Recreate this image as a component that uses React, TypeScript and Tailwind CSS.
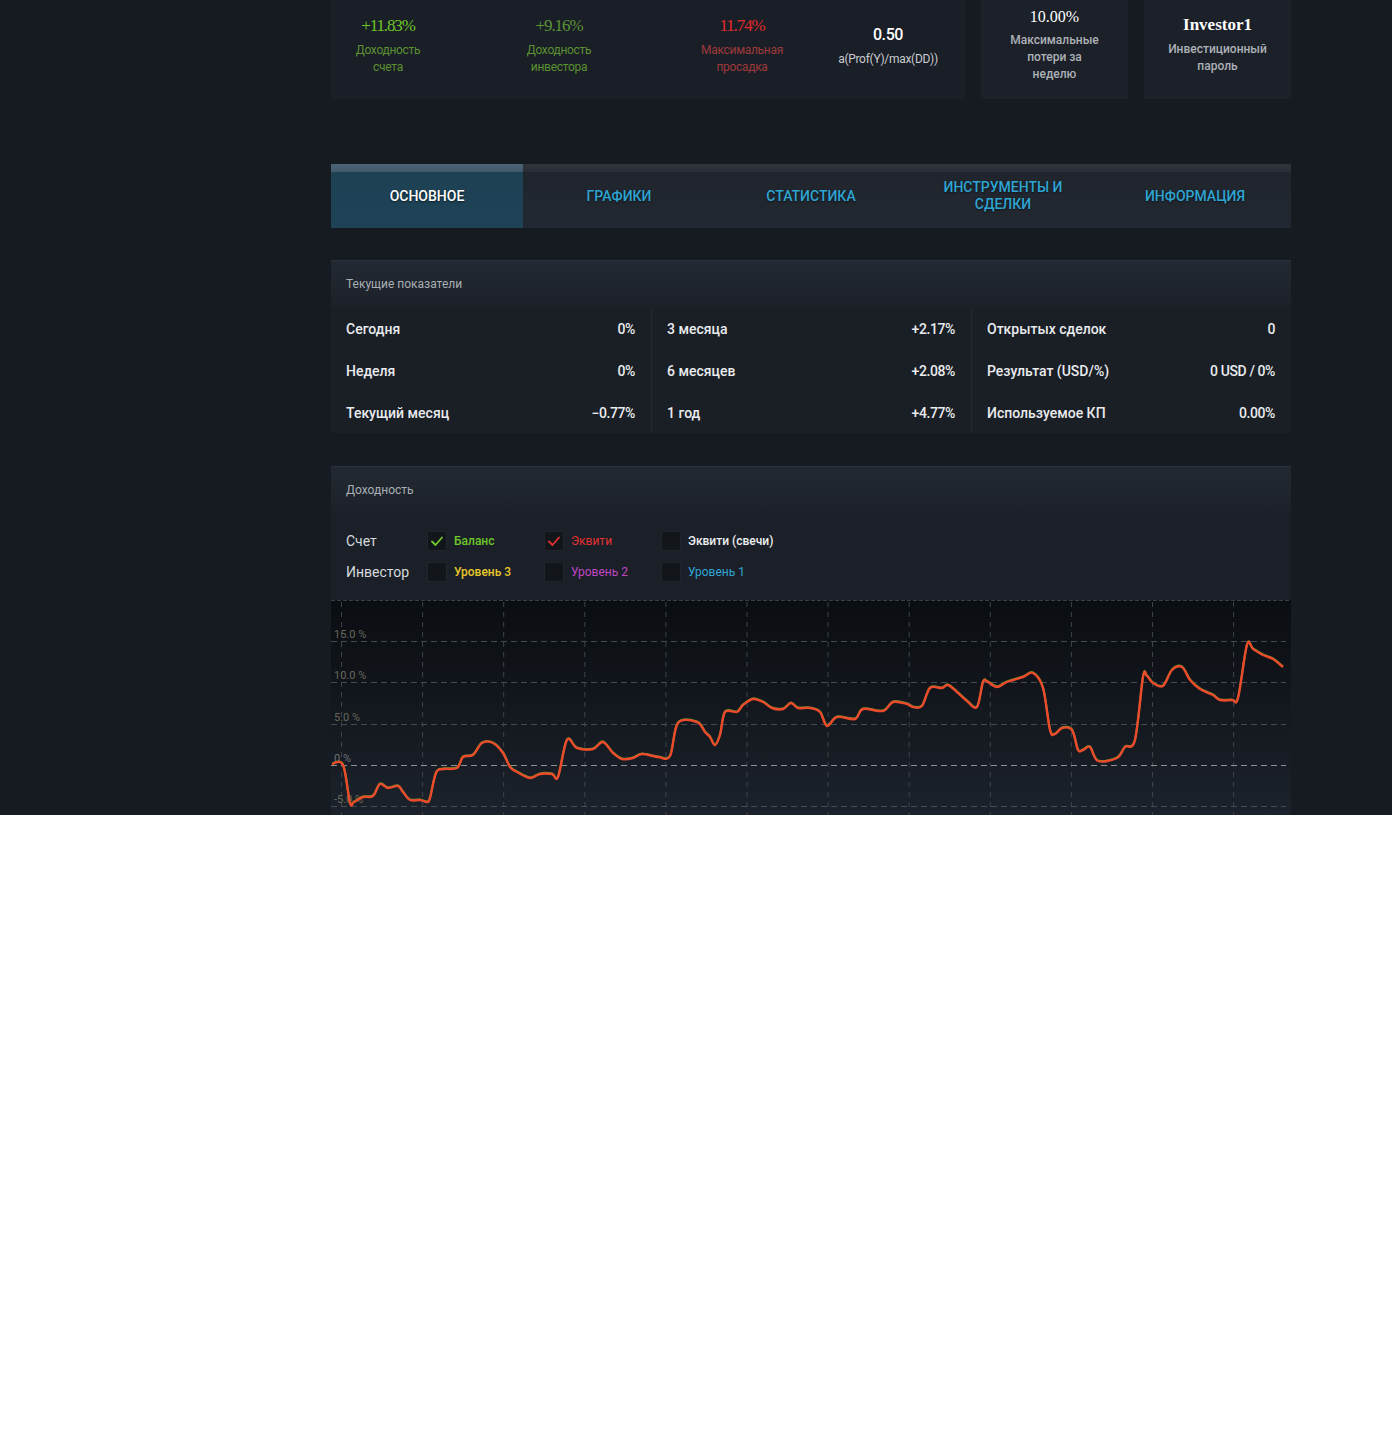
import React from "react";

const font = { fontFamily: "Roboto, 'Noto Sans', sans-serif" };
const serif = "font-['Liberation_Serif',serif]";

// chart line, traced in page pixels (x, y)
const curve: [number, number][] = [
  [332, 764], [343, 765], [350, 803], [354, 802], [363, 797], [373, 796], [380, 784], [388, 788],
  [398, 786], [403, 792], [410, 800], [420, 800], [427, 802], [430, 798], [436, 773], [443, 769],
  [457, 768], [463, 757], [473, 755], [482, 743], [493, 743], [503, 753], [510, 767], [517, 772],
  [530, 778], [540, 774], [552, 774], [558, 777], [567, 740], [577, 748], [593, 749], [603, 742],
  [613, 753], [622, 759], [633, 758], [642, 754], [658, 757], [670, 756], [678, 723], [697, 722],
  [705, 732], [710, 737], [715, 745], [720, 735], [725, 712], [737, 712], [743, 705], [753, 699],
  [763, 702], [772, 708], [783, 709], [791, 703], [798, 708], [810, 708], [820, 712], [827, 726],
  [837, 717], [855, 719], [863, 709], [883, 711], [893, 702], [907, 704], [913, 707], [922, 706],
  [930, 688], [942, 688], [948, 685], [957, 692], [967, 701], [977, 707], [983, 682], [988, 682],
  [997, 687], [1007, 682], [1023, 677], [1033, 673], [1043, 688], [1050, 730], [1055, 734],
  [1062, 728], [1072, 730], [1078, 750], [1083, 750], [1090, 747], [1098, 761], [1117, 758],
  [1125, 747], [1135, 740], [1143, 677], [1147, 676], [1153, 683], [1163, 686], [1172, 670],
  [1182, 667], [1190, 680], [1200, 689], [1213, 695], [1220, 700], [1232, 700], [1238, 698],
  [1247, 645], [1253, 649], [1263, 655], [1273, 659], [1283, 667],
];

function smoothPath(pts: [number, number][]) {
  const p = pts.map(([x, y]) => [x - 331, y - 600]);
  let d = `M${p[0][0]},${p[0][1]}`;
  for (let i = 0; i < p.length - 1; i++) {
    const p0 = p[i - 1] || p[i];
    const p1 = p[i];
    const p2 = p[i + 1];
    const p3 = p[i + 2] || p2;
    const c1x = p1[0] + (p2[0] - p0[0]) / 6;
    const c1y = p1[1] + (p2[1] - p0[1]) / 6;
    const c2x = p2[0] - (p3[0] - p1[0]) / 6;
    const c2y = p2[1] - (p3[1] - p1[1]) / 6;
    d += ` C${c1x.toFixed(1)},${c1y.toFixed(1)} ${c2x.toFixed(1)},${c2y.toFixed(1)} ${p2[0]},${p2[1]}`;
  }
  return d;
}

const gridY = [
  { y: 41, label: "15.0 %" },
  { y: 82, label: "10.0 %" },
  { y: 124, label: "5.0 %" },
  { y: 165, label: "0 %" },
  { y: 206, label: "-5.0 %" },
];
const gridX = Array.from({ length: 12 }, (_, i) => 10.5 + i * 81.1);

function TopStat({ value, label, w, ml, valueCls, labelCls }: { value: string; label: React.ReactNode; w: string; ml: string; valueCls: string; labelCls: string }) {
  return (
    <div className={`${w} ${ml} shrink-0 text-center pt-[13px]`}>
      <div className={valueCls}>{value}</div>
      <div className={`mt-[3px] text-[12px] leading-[17px] tracking-[-0.3px] ${labelCls}`}>{label}</div>
    </div>
  );
}

function Check({ color }: { color: string }) {
  return (
    <svg width="14" height="14" viewBox="0 0 14 14" fill="none">
      <path d="M2 7.5 L5.5 11 L12 3.5" stroke={color} strokeWidth="1.8" strokeLinecap="round" strokeLinejoin="round" />
    </svg>
  );
}

function Option({ checked, text, label }: { checked?: string; text: string; label: string }) {
  return (
    <div className="w-[117px] flex items-center gap-[7px]">
      <div className="w-5 h-5 rounded-[2px] bg-[#12161b] border border-[#20252c] flex items-center justify-center">
        {checked && <Check color={checked} />}
      </div>
      <span className={`text-[12px] ${text}`}>{label}</span>
    </div>
  );
}

const tabs = ["ОСНОВНОЕ", "ГРАФИКИ", "СТАТИСТИКА", "ИНСТРУМЕНТЫ И СДЕЛКИ", "ИНФОРМАЦИЯ"];

const rows = [
  [["Сегодня", "0%"], ["Неделя", "0%"], ["Текущий месяц", "−0.77%"]],
  [["3 месяца", "+2.17%"], ["6 месяцев", "+2.08%"], ["1 год", "+4.77%"]],
  [["Открытых сделок", "0"], ["Результат (USD/%)", "0 USD / 0%"], ["Используемое КП", "0.00%"]],
];

export default function App() {
  const d = smoothPath(curve);
  return (
    <div className="h-[815px] overflow-hidden bg-[#161a21] pl-[331px]" style={font}>
      <div className="w-[960px]">
        {/* top stats */}
        <div className="flex h-[99px] gap-4">
          <div className="w-[634px] bg-[#1a1e26] flex">
            <TopStat w="w-[100px]" ml="ml-[7px]" value="+11.83%" label={<>Доходность<br />счета</>}
              valueCls={`${serif} text-[17px] tracking-[-1.1px] text-[#6cc628]`} labelCls="text-[#5b9132]" />
            <TopStat w="w-[100px]" ml="ml-[71px]" value="+9.16%" label={<>Доходность<br />инвестора</>}
              valueCls={`${serif} text-[17px] tracking-[-1.1px] text-[#5c9436]`} labelCls="text-[#5b9132]" />
            <TopStat w="w-[110px]" ml="ml-[78px]" value="11.74%" label={<>Максимальная<br />просадка</>}
              valueCls={`${serif} text-[17px] tracking-[-1.1px] text-[#e32b2b]`} labelCls="text-[#9e3a3b]" />
            <div className="w-[130px] ml-[26px] shrink-0 text-center pt-[23px]">
              <div className="text-[16px] font-medium text-white tracking-[-0.4px]">0.50</div>
              <div className="mt-[3px] text-[12px] tracking-[-0.3px] text-[#c9ccd0]">a(Prof(Y)/max(DD))</div>
            </div>
          </div>
          <div className="w-[147px] bg-[#1b2029] text-center pt-[5px]">
            <div className={`${serif} text-[16px] text-white`}>10.00%</div>
            <div className="mt-[3px] text-[12px] leading-[17px] font-medium text-[#adb1b6]">Максимальные<br />потери за<br />неделю</div>
          </div>
          <div className="w-[147px] bg-[#1b2029] text-center pt-[12px]">
            <div className={`${serif} text-[17px] font-bold text-white`}>Investor1</div>
            <div className="mt-[3px] text-[12px] leading-[17px] font-medium text-[#adb1b6]">Инвестиционный<br />пароль</div>
          </div>
        </div>

        {/* tabs */}
        <div className="mt-[65px] grid grid-cols-5 h-16">
          {tabs.map((t, i) => (
            <div
              key={t}
              className={
                i === 0
                  ? "bg-[linear-gradient(to_bottom,#4c6576_0,#3f596b_8px,#1e4154_8px,#1e4256_100%)] flex items-center justify-center text-center text-[14px] font-medium text-white [text-shadow:0_1px_2px_rgba(0,0,0,0.6)]"
                  : "bg-[linear-gradient(to_bottom,#2e333c_0,#2a2f37_8px,#20252d_8px,#222831_100%)] flex items-center justify-center text-center text-[14px] font-medium text-[#2ea5d3] leading-[17px] px-8 [text-shadow:0_1px_2px_rgba(0,0,0,0.5)]"
              }
            >
              {t}
            </div>
          ))}
        </div>

        {/* current stats */}
        <div className="mt-8">
          <div className="h-[47px] bg-[linear-gradient(to_bottom,#232932,#1c2129)] border-t border-[#2b3139] flex items-center px-[15px] text-[12px] text-[#a9afb5]">
            Текущие показатели
          </div>
          <div className="grid grid-cols-3 bg-[#1a1e25]">
            {rows.map((col, ci) => (
              <div key={ci} className={ci > 0 ? "border-l border-[#232830]" : ""}>
                {col.map(([l, v]) => (
                  <div key={l} className="h-[42px] flex items-center justify-between pl-[15px] pr-4 pt-[2px] text-[14px] font-medium text-[#e9ebee]">
                    <span>{l}</span>
                    <span className="tracking-[-0.4px]">{v}</span>
                  </div>
                ))}
              </div>
            ))}
          </div>
        </div>

        {/* profitability */}
        <div className="mt-[33px]">
          <div className="h-[47px] bg-[linear-gradient(to_bottom,#232932,#1c2129)] border-t border-[#2b3139] flex items-center px-[15px] text-[12px] text-[#a9afb5]">
            Доходность
          </div>
          <div className="h-[87px] bg-[#1b2028] pt-[18px] pl-[15px] flex flex-col gap-[11px]">
            <div className="flex items-center h-5">
              <span className="w-[81px] text-[14px] text-[#d6dade]">Счет</span>
              <Option checked="#6fc72b" text="font-medium text-[#6fc72b]" label="Баланс" />
              <Option checked="#e3302f" text="text-[#e3302f]" label="Эквити" />
              <Option text="font-medium text-[#eef0f2]" label="Эквити (свечи)" />
            </div>
            <div className="flex items-center h-5">
              <span className="w-[81px] text-[14px] text-[#d6dade]">Инвестор</span>
              <Option text="font-medium text-[#e9c62a]" label="Уровень 3" />
              <Option text="text-[#c045c4]" label="Уровень 2" />
              <Option text="text-[#2fa6d6]" label="Уровень 1" />
            </div>
          </div>
          <div className="h-[215px] bg-[linear-gradient(to_bottom,#0a0d11,#1c222b)]">
            <svg width="960" height="215" viewBox="0 0 960 215" className="block">
              <line x1="0" y1="0.5" x2="960" y2="0.5" stroke="#3a4048" strokeDasharray="4 2" />
              {gridX.map((x) => (
                <line key={x} x1={x} y1="2" x2={x} y2="215" stroke="#3e434a" strokeDasharray="5 5" />
              ))}
              {gridY.map((g) => (
                <line key={g.y} x1="0" y1={g.y + 0.5} x2="955" y2={g.y + 0.5} stroke={g.y === 165 ? "#8d9196" : "#464b52"} strokeDasharray="6 4" />
              ))}
              {gridY.map((g) => (
                <text key={g.label} x="3" y={g.y - 3} fontSize="11" fill={g.y === 165 ? "#6c7178" : "#66675a"} fontFamily="Roboto, sans-serif">
                  {g.label}
                </text>
              ))}
              <path d={d} fill="none" stroke="#5a9a2a" strokeWidth="2" transform="translate(0,-0.6)" />
              <path d={d} fill="none" stroke="#ec4a2b" strokeWidth="2.4" strokeLinejoin="round" />
            </svg>
          </div>
        </div>
      </div>
    </div>
  );
}
